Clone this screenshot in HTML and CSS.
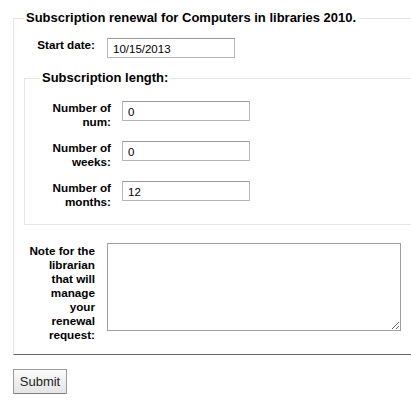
FILE: index.html
```html
<!DOCTYPE html>
<html lang="en">
<head>
<meta charset="utf-8">
<title>Subscription renewal</title>
<link rel="stylesheet" href="styles.css">
</head>
<body>
<form class="renewal">
  <fieldset class="rows main">
    <legend>Subscription renewal for Computers in libraries 2010.</legend>
    <ol class="fields">
      <li class="row">
        <label for="startdate">Start date:</label>
        <input id="startdate" class="text" type="text" value="10/15/2013">
      </li>
      <li class="nested">
        <fieldset class="rows sub">
          <legend>Subscription length:</legend>
          <ol class="fields sub-fields">
            <li class="row">
              <label for="numberlength">Number of num:</label>
              <input id="numberlength" class="text" type="text" value="0">
            </li>
            <li class="row">
              <label for="weeklength">Number of weeks:</label>
              <input id="weeklength" class="text" type="text" value="0">
            </li>
            <li class="row">
              <label for="monthlength">Number of months:</label>
              <input id="monthlength" class="text" type="text" value="12">
            </li>
          </ol>
        </fieldset>
      </li>
      <li class="row note-row">
        <label for="note">Note for the librarian that will manage your renewal request:</label>
        <textarea id="note"></textarea>
      </li>
    </ol>
  </fieldset>
  <div class="actions">
    <button type="submit" class="submit">Submit</button>
  </div>
</form>
</body>
</html>
```

FILE: styles.css
```css
html, body {
  margin: 0;
  padding: 0;
  overflow: hidden;
  background: #fff;
}

body {
  font-family: "Liberation Sans", Arial, Helvetica, sans-serif;
  color: #000;
}

.renewal {
  padding: 10px 0 0 13px;
}

fieldset.rows {
  margin: 0;
  min-width: 0;
}

fieldset.rows legend {
  font-size: 13px;
  font-weight: bold;
  line-height: 16px;
  padding: 0 2px;
  margin: 0;
}

.main {
  border: 1px solid #e6e6e6;
  border-right: none;
  border-bottom: 1px solid #666;
  padding: 12px 0 12px 10px;
}

.sub {
  border: 1px solid #e6e6e6;
  border-right: none;
  padding: 15px 0 15px 15px;
  margin: 0 0 0 1px;
}

.fields {
  list-style: none;
  margin: 0;
  padding: 0;
  display: flex;
  flex-direction: column;
}

.main > .fields > li + li {
  margin-top: 12px;
}

.main > .fields > .note-row {
  margin-top: 18px;
}

.sub-fields {
  gap: 12px;
}

.row {
  display: flex;
  align-items: flex-start;
}

.row label {
  width: 69px;
  margin-left: 2px;
  margin-right: 12px;
  flex: none;
  text-align: right;
  font-size: 11.7px;
  font-weight: bold;
  line-height: 14px;
}

.note-row label {
  padding-top: 1px;
}

.sub .row label {
  margin-right: 11px;
}

input.text {
  box-sizing: border-box;
  width: 128px;
  height: 20px;
  margin: 0;
  padding: 1px 5px 0;
  border: 1px solid #b5b5b5;
  border-top-color: #9a9a9a;
  font-family: "Liberation Sans", Arial, sans-serif;
  font-size: 11.5px;
  color: #000;
  background: #fff;
  outline: none;
}

textarea {
  box-sizing: border-box;
  width: 294px;
  height: 88px;
  margin: 0;
  padding: 2px;
  border: 1px solid #a0a0a0;
  font-family: "Liberation Sans", Arial, sans-serif;
  font-size: 12px;
  background: #fff;
}

.actions {
  padding-top: 14px;
}

.submit {
  box-sizing: border-box;
  width: 54px;
  height: 25px;
  margin: 0;
  padding: 0;
  border: 1px solid #9a9a9a;
  border-bottom-color: #7f7f7f;
  border-radius: 1px;
  background: linear-gradient(#fbfbfb, #e4e4e4);
  font-family: "Liberation Sans", Arial, sans-serif;
  font-size: 13px;
  color: #222;
}
```
